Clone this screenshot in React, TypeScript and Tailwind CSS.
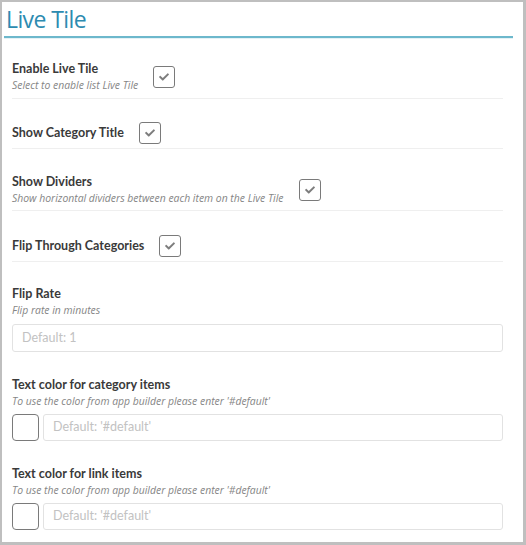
const font = { fontFamily: '"Open Sans", "Liberation Sans", sans-serif' };
const labelFont = { fontFamily: 'Lato, "Open Sans", sans-serif' };

const Checkbox = () => (
  <div className="size-[22px] shrink-0 rounded-[3px] border-[1.5px] border-[#7a7a7a] flex items-center justify-center">
    <svg viewBox="0 0 512 512" className="w-[10px] h-[10px] fill-[#7d7d7d]">
      <path d="M173.898 439.404l-166.4-166.4c-9.997-9.997-9.997-26.206 0-36.204l36.203-36.204c9.997-9.998 26.207-9.998 36.204 0L192 312.69 432.095 72.596c9.997-9.997 26.207-9.997 36.204 0l36.203 36.204c9.997 9.997 9.997 26.206 0 36.204l-294.4 294.401c-9.998 9.997-26.207 9.997-36.204-.001z" />
    </svg>
  </div>
);

const Label = ({ title, desc }: { title: string; desc?: string }) => (
  <div>
    <p style={labelFont} className="text-[12.5px] leading-4 font-bold text-[#3a3a3a]">{title}</p>
    {desc && <p className="text-[10.4px] leading-4 italic text-[#858585]">{desc}</p>}
  </div>
);

const Placeholder = ({ text }: { text: string }) => (
  <span style={labelFont} className="text-[12.5px] text-[#c2c2c2]">{text}</span>
);

const ColorField = ({ title }: { title: string }) => (
  <div className="pt-[25px]">
    <Label title={title} desc="To use the color from app builder please enter '#default'" />
    <div className="mt-[5px] flex gap-[4px]">
      <div className="w-[27px] h-[27px] shrink-0 rounded-[4px] border-[1.5px] border-[#7a7a7a]" />
      <div className="flex-1 h-[27px] rounded-[3px] border border-[#e2e2e2] px-[9px] flex items-center">
        <Placeholder text="Default: '#default'" />
      </div>
    </div>
  </div>
);

export default function App() {
  return (
    <div style={font} className="w-[526px] h-[545px] bg-white border-t-2 border-l-2 border-r-[3px] border-b-[3px] border-[#bfbfbf]">
      <div className="ml-[2px] mr-[10px] h-[36px] border-b-2 border-[#6db8cc] shadow-[0_1px_0_#e4f2f6]">
        <h1 className="pl-[2px] pt-[1px] text-[23px] leading-[32px] tracking-[-0.6px] text-[#2d8bb0]">Live Tile</h1>
      </div>

      <div className="pl-[10px] pr-[20px]">
        <div className="pt-[23px] pb-[5px] flex items-center gap-[15px] border-b border-[#efefef]">
          <Label title="Enable Live Tile" desc="Select to enable list Live Tile" />
          <Checkbox />
        </div>
        <div className="pt-[23px] pb-[4px] flex items-center gap-[15px] border-b border-[#efefef]">
          <Label title="Show Category Title" />
          <Checkbox />
        </div>
        <div className="pt-[25px] pb-[4px] flex items-center gap-[15px] border-b border-[#efefef]">
          <Label title="Show Dividers" desc="Show horizontal dividers between each item on the Live Tile" />
          <Checkbox />
        </div>
        <div className="pt-[24px] pb-[4px] flex items-center gap-[15px] border-b border-[#efefef]">
          <Label title="Flip Through Categories" />
          <Checkbox />
        </div>

        <div className="pt-[24px]">
          <Label title="Flip Rate" desc="Flip rate in minutes" />
          <div className="mt-[6px] h-[28px] rounded-[3px] border border-[#e2e2e2] px-[9px] flex items-center">
            <Placeholder text="Default: 1" />
          </div>
        </div>

        <ColorField title="Text color for category items" />
        <ColorField title="Text color for link items" />
      </div>
    </div>
  );
}
